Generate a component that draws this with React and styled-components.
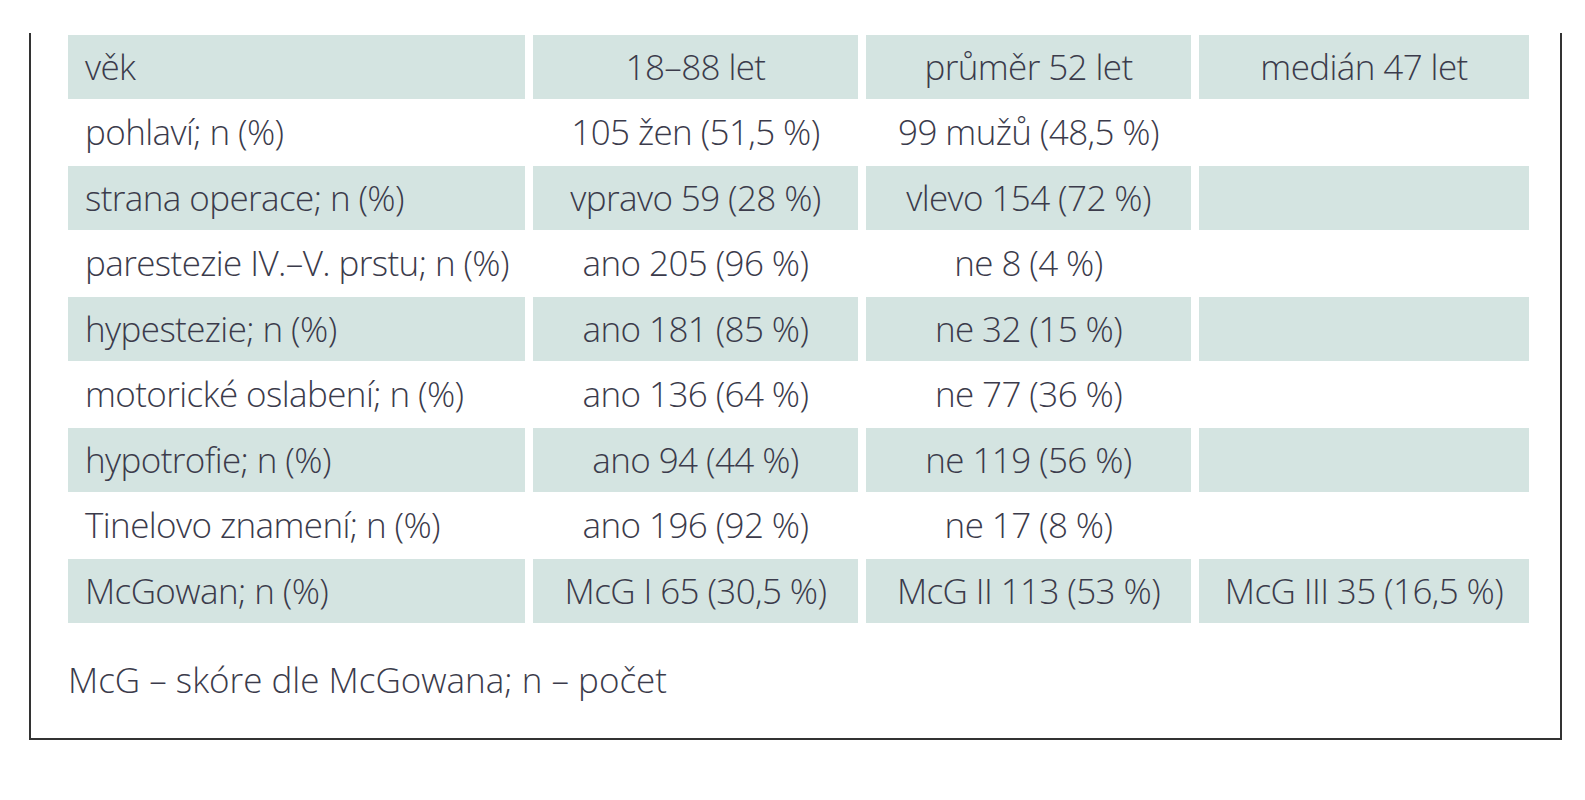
import React from "react";
import styled, { createGlobalStyle } from "styled-components";

const Global = createGlobalStyle`
  html, body { margin: 0; padding: 0; background: #ffffff; }
  body { font-family: "Open Sans", "Liberation Sans", sans-serif; }
`;

const Frame = styled.section`
  box-sizing: border-box;
  margin-left: 29px;
  width: 1533px;
  border: 2px solid #333333;
  border-top: none;
  padding: 0 31px 37px 37px;
  font-family: "Open Sans", "Liberation Sans", sans-serif;
  font-weight: 300;
  font-size: 35px;
  color: #3b3b4b;
`;

const Table = styled.table`
  border-collapse: separate;
  border-spacing: 8px 2px;
  margin: 33px -8px 0;
  width: calc(100% + 16px);
  table-layout: fixed;
`;

const Cell = styled.td`
  height: 63.5px;
  padding: 0;
  padding-left: ${(p) => (p.$first ? "17px" : "0")};
  text-align: ${(p) => (p.$first ? "left" : "center")};
  vertical-align: middle;
  white-space: nowrap;
  background: ${(p) => (p.$shaded ? "#d4e4e1" : "transparent")};
  font-weight: 300;
  letter-spacing: -0.6px;
  line-height: 1.2;
`;

const Note = styled.p`
  margin: 34px 0 0;
  line-height: 1.2;
`;

const widths = [457, 325, 325, 330];

const rows = [
  ["věk", "18–88 let", "průměr 52 let", "medián 47 let"],
  ["pohlaví; n (%)", "105 žen (51,5 %)", "99 mužů (48,5 %)", ""],
  ["strana operace; n (%)", "vpravo 59 (28 %)", "vlevo 154 (72 %)", ""],
  ["parestezie IV.–V. prstu; n (%)", "ano 205 (96 %)", "ne 8 (4 %)", ""],
  ["hypestezie; n (%)", "ano 181 (85 %)", "ne 32 (15 %)", ""],
  ["motorické oslabení; n (%)", "ano 136 (64 %)", "ne 77 (36 %)", ""],
  ["hypotrofie; n (%)", "ano 94 (44 %)", "ne 119 (56 %)", ""],
  ["Tinelovo znamení; n (%)", "ano 196 (92 %)", "ne 17 (8 %)", ""],
  ["McGowan; n (%)", "McG I 65 (30,5 %)", "McG II 113 (53 %)", "McG III 35 (16,5 %)"],
];

export default function App() {
  return (
    <>
      <Global />
      <Frame>
        <Table>
          <colgroup>
            {widths.map((w, i) => (
              <col key={i} style={{ width: w }} />
            ))}
          </colgroup>
          <tbody>
            {rows.map((r, ri) => (
              <tr key={ri}>
                {r.map((c, ci) => (
                  <Cell key={ci} $first={ci === 0} $shaded={ri % 2 === 0}>
                    {c}
                  </Cell>
                ))}
              </tr>
            ))}
          </tbody>
        </Table>
        <Note>McG – skóre dle McGowana; n – počet</Note>
      </Frame>
    </>
  );
}
